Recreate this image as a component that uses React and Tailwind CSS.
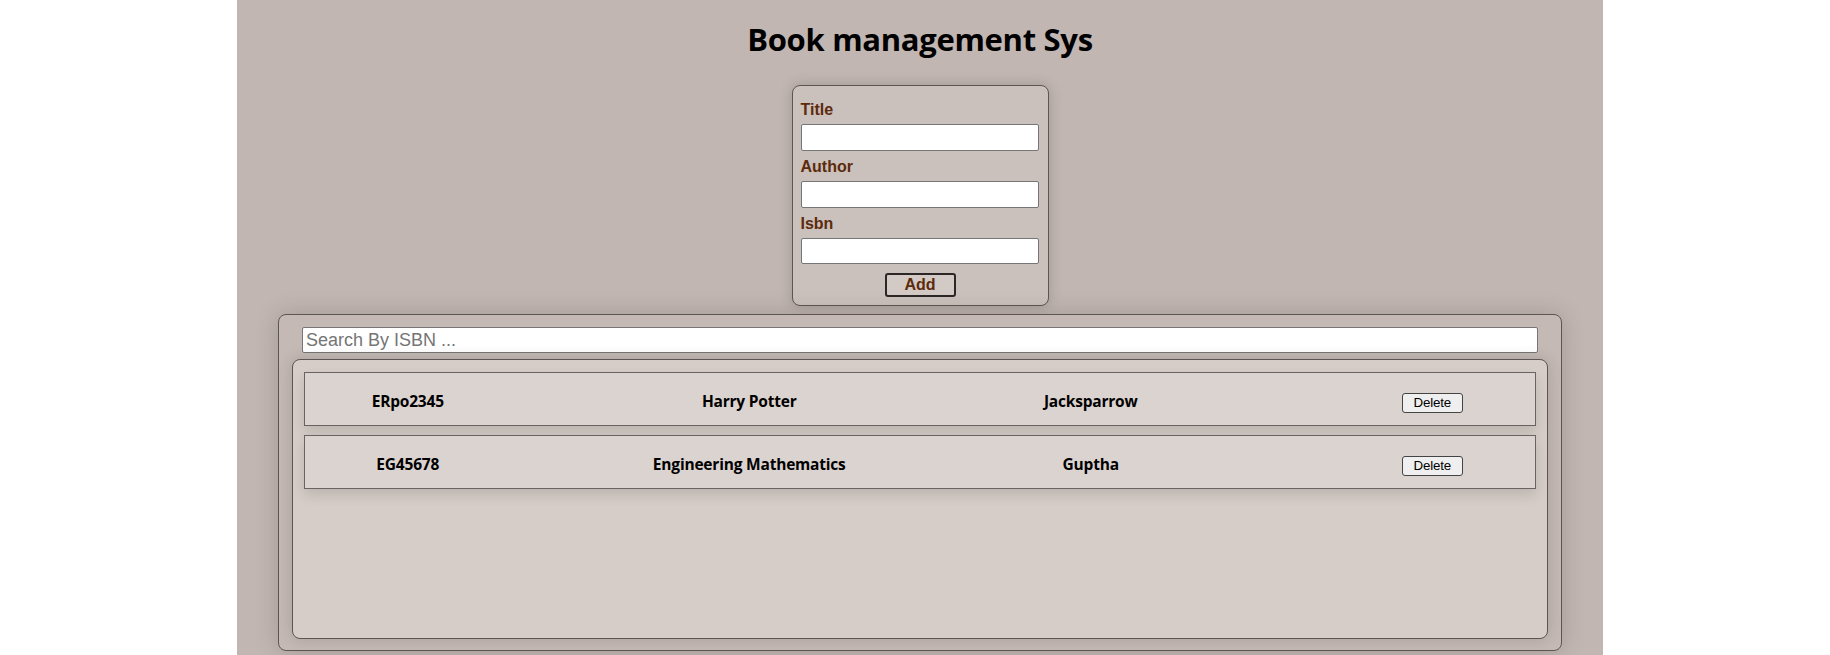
import { useState } from 'react'

const books = [
  { isbn: 'ERpo2345', title: 'Harry Potter', author: 'Jacksparrow' },
  { isbn: 'EG45678', title: 'Engineering Mathematics', author: 'Guptha' },
]

export default function App() {
  const [search, setSearch] = useState('')
  const list = books.filter((b) => b.isbn.toLowerCase().includes(search.toLowerCase()))

  return (
    <div className="min-h-[655px] bg-white">
      <div className="ml-[237px] flex min-h-[655px] w-[1366px] flex-col items-center bg-[#c1b6b2] pb-1">
        <h1 className="mt-[20px] font-['Open_Sans',sans-serif] text-[31px] font-bold leading-[38px] tracking-[-0.3px] text-black">
          Book management Sys
        </h1>

        <form className="mt-[27px] flex w-[257px] flex-col rounded-lg border border-[#5e5454] bg-[#cac0bc] px-[8px] pt-[15px] pb-[8px] font-['Liberation_Sans',Arial,sans-serif] shadow-[0_0_14px_rgba(0,0,0,0.18)]">
          <label className="text-[16px] font-bold leading-[18px] text-[#5c2b0c]">Title</label>
          <input className="mt-[5px] h-[27px] w-[238px] rounded-[2px] border border-[#767676] bg-white" />
          <label className="mt-[7px] text-[16px] font-bold leading-[18px] text-[#5c2b0c]">Author</label>
          <input className="mt-[5px] h-[27px] w-[238px] rounded-[2px] border border-[#767676] bg-white" />
          <label className="mt-[7px] text-[16px] font-bold leading-[18px] text-[#5c2b0c]">Isbn</label>
          <input className="mt-[5px] h-[26px] w-[238px] rounded-[2px] border border-[#767676] bg-white" />
          <button type="button" className="mx-auto mt-[9px] h-[24px] w-[71px] rounded-[3px] border-2 border-[#2b2727] bg-[#d3c9c5] text-[16px] font-bold leading-none text-[#5c2b0c]">
            Add
          </button>
        </form>

        <div className="mt-[8px] w-[1284px] rounded-lg border border-[#5e5454] bg-[#c4b9b4] px-[13px] pt-[12px] pb-[11px] shadow-[0_0_24px_rgba(0,0,0,0.16)]">
          <input
            placeholder="Search By ISBN ..."
            value={search}
            onChange={(e) => setSearch(e.target.value)}
            className="mx-auto block h-[26px] w-[1236px] rounded-[2px] border border-[#767676] bg-white px-[3px] font-['Liberation_Sans',Arial,sans-serif] text-[18px] text-black placeholder:text-[#757575]"
          />
          <div className="mt-[6px] h-[280px] rounded-lg border border-[#5e5454] bg-[#d6cdc8] px-[11px] pt-[12px] shadow-[0_0_16px_rgba(0,0,0,0.14)]">
            <div className="flex flex-col gap-[9px]">
              {list.map((b) => (
                <div key={b.isbn} className="h-[54px] border border-[#6b6161] bg-[#dbd3cf] shadow-[0_6px_12px_rgba(0,0,0,0.12)]">
                  <div className="-ml-[68px] flex h-full w-[1366px] items-center pt-[6px] font-['Open_Sans',sans-serif] text-[15.5px] font-bold tracking-[-0.2px] text-black">
                    <div className="w-1/4 text-center">{b.isbn}</div>
                    <div className="w-1/4 text-center">{b.title}</div>
                    <div className="w-1/4 text-center">{b.author}</div>
                    <div className="w-1/4 text-center">
                      <button type="button" className="h-[20px] rounded-[3px] border border-[#444] bg-[#efefef] px-[11px] font-['Liberation_Sans',Arial,sans-serif] text-[13.33px] font-normal leading-none text-black">
                        Delete
                      </button>
                    </div>
                  </div>
                </div>
              ))}
            </div>
          </div>
        </div>
      </div>
    </div>
  )
}
